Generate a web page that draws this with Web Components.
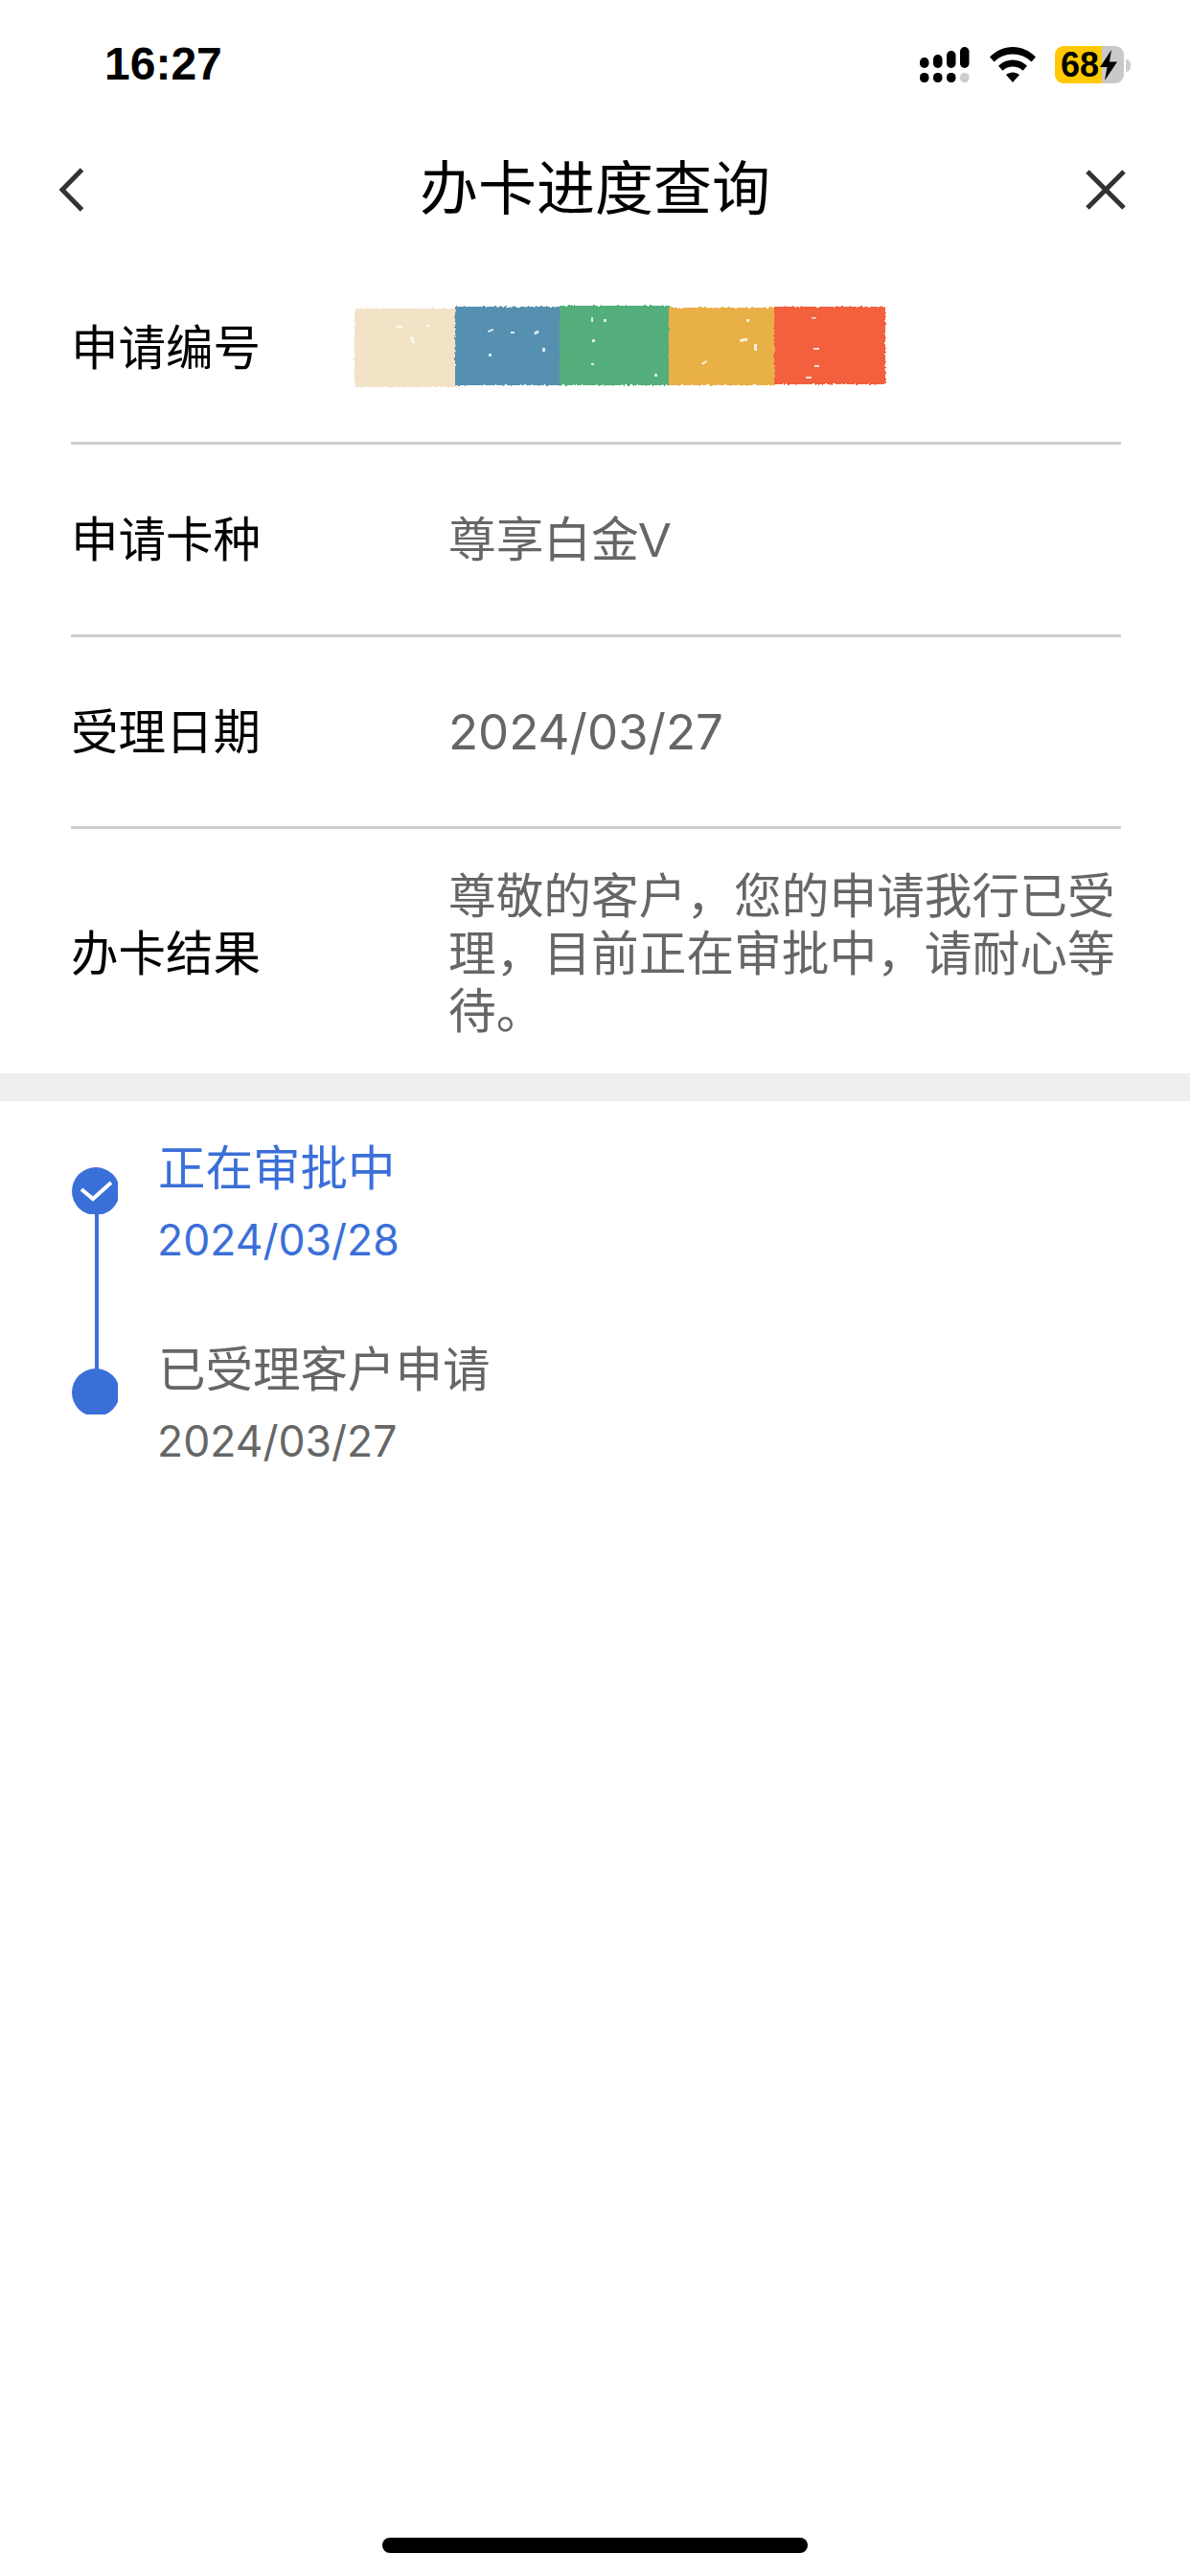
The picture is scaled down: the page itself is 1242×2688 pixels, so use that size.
<!DOCTYPE html>
<html lang="zh-CN"><head><meta charset="utf-8"><title>办卡进度查询</title>
<style>
html,body{margin:0;padding:0;background:#fff}
body{width:1242px;height:2688px;overflow:hidden;display:flex;flex-direction:column;font-family:"Liberation Sans","Noto Sans CJK SC",sans-serif}
</style></head><body>
<status-bar></status-bar>
<nav-bar>办卡进度查询</nav-bar>
<info-list>
  <info-row label="申请编号" h="200"><color-mosaic></color-mosaic></info-row>
  <info-row label="申请卡种" h="201">尊享白金V</info-row>
  <info-row label="受理日期" h="200"><span style='font-family:Inter,"Liberation Sans",sans-serif;font-size:51px'>2024/03/27</span></info-row>
  <info-row label="办卡结果" h="255" last>尊敬的客户，您的申请我行已受理，目前正在审批中，请耐心等待。</info-row>
</info-list>
<section-gap></section-gap>
<progress-list>
  <progress-item title="正在审批中" date="2024/03/28" state="active" check></progress-item>
  <progress-item title="已受理客户申请" date="2024/03/27" end></progress-item>
</progress-list>
<home-indicator></home-indicator>
<script>
function def(name, html, extra){
  const t=document.createElement('template');t.innerHTML=html;
  customElements.define(name,class extends HTMLElement{
    constructor(){super();this.attachShadow({mode:'open'}).appendChild(t.content.cloneNode(true));}
    connectedCallback(){extra&&extra(this,this.shadowRoot);}
  });
}
def('status-bar',`<style>
:host{display:flex;height:132px;flex:none;box-sizing:border-box;padding:49px 62px 0 109px;justify-content:space-between;align-items:flex-start}
.t{font:bold 48px/36px "Liberation Sans",sans-serif;color:#000}
.i{display:flex;align-items:flex-start}
svg{display:block}
.b{position:relative;width:72px;height:39px;margin-left:20px;margin-top:-1px;border-radius:9px;overflow:hidden;background:linear-gradient(90deg,#ffc800 0 49px,#c9c9c9 49px);display:flex;align-items:center;box-sizing:border-box;padding-left:6px;font:bold 36px/39px "Liberation Sans",sans-serif;color:#000}
.n{width:5px;height:13px;margin:13px 0 0 2px;background:#cfcfcf;border-radius:0 5px 5px 0}
</style>
<div class="t">16:27</div>
<div class="i">
<svg width="52" height="37" viewBox="0 0 52 37" fill="#000">
<rect x="0" y="11" width="9.500" height="11" rx="4.700"/><rect x="14" y="8" width="9.500" height="14" rx="4.700"/><rect x="28" y="4" width="9.500" height="18" rx="4.700"/><rect x="42" y="0" width="9.500" height="22" rx="4.700"/>
<rect x="0" y="27" width="9.500" height="10" rx="4.500"/><rect x="14" y="27" width="9.500" height="10" rx="4.500"/><rect x="28" y="27" width="9.500" height="10" rx="4.500"/><rect x="42" y="27" width="9.500" height="10" rx="4.500" fill="#cdcdcd"/>
</svg>
<svg width="48" height="37" viewBox="0 0 48 37" style="margin-left:21px" fill="#000">
<path d="M24 0C15 0 7 3.500 0 10.500L4.500 15.500C10 10.200 16.500 7.500 24 7.500S38 10.200 43.500 15.500L48 10.500C41 3.500 33 0 24 0Z"/>
<path d="M24 13.500C18.500 13.500 13.300 15.600 9 19.800L13.500 24.700C16.500 22 20 20.600 24 20.600S31.500 22 34.500 24.700L39 19.800C34.700 15.600 29.500 13.500 24 13.500Z"/>
<path d="M24 26.500C21.500 26.500 19 27.400 17 29L24 37L31 29C29 27.400 26.500 26.500 24 26.500Z"/>
</svg>
<div class="b"><span>68</span><svg width="20" height="32" viewBox="0 0 20 32"><path d="M13 0L1 18H8.500L6 32L19 12.500H11Z" fill="#000"/></svg></div>
<div class="n"></div>
</div>`);
def('nav-bar',`<style>
:host{display:grid;grid-template-columns:1fr auto 1fr;flex:none;height:132px;box-sizing:border-box;padding:0 62px;align-items:center}
.title{text-align:center;font:400 61px/80px "Liberation Sans","Noto Sans CJK SC",sans-serif;color:#000}
svg{display:block}
.x{justify-self:end;margin-right:5px}
</style>
<svg width="26" height="46" viewBox="0 0 26 46"><path d="M23.500 2L3 23L23.500 44" fill="none" stroke="#333" stroke-width="5"/></svg>
<div class="title"><slot></slot></div>
<svg class="x" width="42" height="42" viewBox="0 0 42 42"><path d="M2 2L40 40M40 2L2 40" fill="none" stroke="#333" stroke-width="5"/></svg>`);
def('info-list',`<style>:host{display:block;flex:none;padding:0 72px 0 74px}</style><slot></slot>`);
def('info-row',`<style>
:host{display:flex;align-items:center;box-sizing:border-box;border-bottom:3px solid #cdcdcd;padding-top:2px}
:host([last]){border-bottom:0;padding-top:7px}
.l{width:394px;flex:none;font-size:49.500px;line-height:60px;color:#000}
.v{flex:1;font-size:49.700px;line-height:60px;color:#666}
</style><div class="l"></div><div class="v"><slot></slot></div>`,(el,sr)=>{
  sr.querySelector('.l').textContent=el.getAttribute('label');
  el.style.height=el.getAttribute('h')+'px';
});
def('color-mosaic',`<style>:host{display:block;margin:-2px 0 0 -101px;width:560px;height:92px}svg{display:block}</style>
<svg width="560" height="92" viewBox="0 0 560 92">
<defs><filter id="r" x="-5%" y="-10%" width="110%" height="120%"><feTurbulence type="fractalNoise" baseFrequency="0.35" numOctaves="2" seed="4"/><feDisplacementMap in="SourceGraphic" scale="3.500"/></filter>
<filter id="s"><feGaussianBlur stdDeviation=".6"/></filter></defs>
<g filter="url(#r)">
<rect x="3" y="5" width="107" height="82" fill="#f3e3c6"/>
<rect x="108" y="3" width="110" height="82" fill="#5490b0"/>
<rect x="217" y="2" width="115" height="83" fill="#52ae7c"/>
<rect x="331" y="4" width="111" height="81" fill="#e9b047"/>
<rect x="441" y="3" width="116" height="81" fill="#f2603e"/>
</g>
<g fill="#fff" opacity=".8" filter="url(#s)">
<rect x="61" y="35" width="3" height="7" transform="rotate(-20 61 35)"/><rect x="47" y="23" width="6" height="2"/><rect x="78" y="22" width="4" height="2"/>
<rect x="142" y="28" width="6" height="2" transform="rotate(-20 142 28)"/><rect x="190" y="30" width="5" height="3" transform="rotate(-30 190 30)"/><rect x="199" y="46" width="3" height="4"/><rect x="143" y="52" width="3" height="3"/><rect x="166" y="29" width="4" height="2"/>
<rect x="250" y="14" width="2" height="5"/><rect x="263" y="16" width="3" height="3"/><rect x="251" y="37" width="3" height="3"/><rect x="250" y="62" width="3" height="2"/><rect x="316" y="73" width="3" height="3"/>
<rect x="405" y="37" width="8" height="3" transform="rotate(-10 405 37)"/><rect x="420" y="42" width="3" height="7"/><rect x="365" y="62" width="6" height="2" transform="rotate(-30 365 62)"/><rect x="412" y="16" width="3" height="3"/>
<rect x="480" y="14" width="5" height="1.500"/><rect x="482" y="46" width="6" height="2"/><rect x="483" y="64" width="5" height="2"/><rect x="474" y="76" width="6" height="2"/>
</g></svg>`);
def('section-gap',`<style>:host{display:block;flex:none;height:29px;background:#eee}</style>`);
def('progress-list',`<style>:host{display:block;flex:none;padding:38px 0 0 75px}</style><slot></slot>`);
def('progress-item',`<style>
:host{display:flex;height:210px;color:#666;position:relative}
:host([state=active]){color:#3b6fd8}
.dot{width:50px;height:50px;flex:none;margin-top:31px;position:relative;clip-path:inset(0 2px 1px 0)}
:host([end]) .dot{clip-path:inset(0 2px 2px 0)}
.dot svg{display:block}
.line{position:absolute;left:24px;top:80px;width:3.500px;height:162px;background:#3b6fd8}
:host([end]) .line{display:none}
.c{flex:none;margin-left:39px;padding-top:3px}
.title{font-size:49.500px;line-height:60px;padding-left:1px}
.date{font:44.500px/60px Inter,"Liberation Sans",sans-serif;margin-top:14px}
.chk{display:none}
:host([check]) .chk{display:inline}
</style><div class="dot"><svg width="50" height="50" viewBox="0 0 50 50"><circle cx="25" cy="25" r="25" fill="#3b6fd8"/><path class="chk" d="M10 23L22 33L41 16" fill="none" stroke="#fff" stroke-width="4"/></svg></div><div class="line"></div>
<div class="c"><div class="title"></div><div class="date"></div></div>`,(el,sr)=>{
  sr.querySelector('.title').textContent=el.getAttribute('title');
  sr.querySelector('.date').textContent=el.getAttribute('date');
  el.removeAttribute('title');
});
def('home-indicator',`<style>:host{display:block;flex:none;width:444px;height:16px;margin:auto auto 24px;border-radius:8px;background:#000}</style>`);
</script>
</body></html>
